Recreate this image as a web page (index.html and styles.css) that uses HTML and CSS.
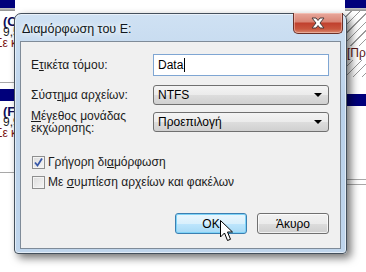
FILE: index.html
```html
<!DOCTYPE html>
<html lang="el">
<head>
  <meta charset="UTF-8">
  <title>Διαμόρφωση του E:</title>
  <link rel="stylesheet" href="styles.css">
</head>
<body>

<div class="desk">
  <div class="desk-left">
    <div class="navy top"></div>
    <div class="rule"></div>
    <div class="vol">
      <div class="vol-name">(C</div>
      <div class="vol-size">9,5</div>
      <div class="vol-state">Σε κ</div>
    </div>
    <div class="rule light"></div>
    <div class="navy band"></div>
    <div class="vol">
      <div class="vol-name">(F:</div>
      <div class="vol-size">9,9</div>
      <div class="vol-state">Σε κ</div>
    </div>
    <div class="rule light"></div>
  </div>

  <div class="desk-right">
    <div class="navy top"></div>
    <div class="rule"></div>
    <div class="hatch"><span class="hatch-text">[Πρ</span></div>
    <div class="navy band right-band"></div>
    <div class="blank"></div>
    <div class="rule light"></div>
    <div class="rule light gap"></div>
  </div>
</div>

<div class="dialog">
  <div class="titlebar">
    <span class="title">Διαμόρφωση του E:</span>
    <button class="close" type="button">
      <svg width="18" height="12" viewBox="0 0 18 12">
        <path d="M3 1 L7 1 L9 3.5 L11 1 L15 1 L11 6 L15 11 L11 11 L9 8.5 L7 11 L3 11 L7 6 Z" fill="#fff" stroke="#4a3b3b" stroke-width="1"/>
      </svg>
    </button>
  </div>

  <div class="client">
    <div class="row">
      <label class="lbl">Ε<u>τ</u>ικέτα τόμου:</label>
      <div class="field">Data<span class="caret"></span></div>
    </div>

    <div class="row">
      <label class="lbl">Σύστ<u>η</u>μα αρχείων:</label>
      <div class="combo">NTFS<span class="arrow"></span></div>
    </div>

    <div class="row row-top">
      <label class="lbl"><u>Μ</u>έγεθος μονάδας<br>εκχώρησης:</label>
      <div class="combo">Προεπιλογή<span class="arrow"></span></div>
    </div>

    <div class="checks">
      <div class="check">
        <span class="box">
          <svg width="11" height="11" viewBox="0 0 11 11">
            <path d="M2 5.5 L4.5 8.5 L9 1.5" fill="none" stroke="#3657a8" stroke-width="1.8"/>
          </svg>
        </span>
        <span>Γρήγορη δι<u>α</u>μόρφωση</span>
      </div>
      <div class="check">
        <span class="box"></span>
        <span>Με <u>σ</u>υμπίεση αρχείων και φακέλων</span>
      </div>
    </div>

    <div class="actions">
      <button class="btn default" type="button">OK</button>
      <button class="btn" type="button">Άκυρο</button>
    </div>
  </div>
</div>

<svg class="cursor" width="14" height="22" viewBox="0 0 14 22">
  <path d="M0.5 0.5 V17 L4.5 13 L7.5 20.5 L10.5 19.3 L7.5 12 H12.5 Z" fill="#fff" stroke="#000" stroke-width="1"/>
</svg>

</body>
</html>
```

FILE: styles.css
```css
body {
  margin: 0;
  width: 366px;
  height: 272px;
  overflow: hidden;
  position: relative;
  background: #fff;
  font-family: "Liberation Sans", Arial, sans-serif;
  font-size: 12px;
  color: #1b1b1b;
}

/* background: disk management window */
.desk {
  display: flex;
  justify-content: space-between;
  height: 272px;
}
.desk-left, .desk-right {
  display: flex;
  flex-direction: column;
  overflow: hidden;
}
.desk-left {
  width: 15px;
}
.desk-right {
  width: 21px;
}
.navy {
  background: #00007b;
}
.top {
  height: 8px;
}
.rule {
  height: 3px;
  background: linear-gradient(#c8c8c8, #8e8e8e);
}
.rule.light {
  height: 1px;
  background: #a8a8a8;
}
.rule.gap {
  margin-top: 4px;
}
.vol {
  height: 66px;
  padding: 5px 0 0 3px;
  line-height: 11px;
  white-space: nowrap;
}
.vol-name {
  font-weight: bold;
  color: #0d0d5a;
  font-size: 13px;
}
.vol-size {
  font-size: 12px;
}
.vol-state {
  color: #7a1010;
  margin-left: -8px;
}
.band {
  height: 12px;
  margin-top: 6px;
}
.desk-left .vol:nth-of-type(2) {
  height: 48px;
  padding-top: 8px;
}
.hatch {
  height: 66px;
  padding: 35px 0 0 2px;
  box-sizing: border-box;
  white-space: nowrap;
  color: #5a1515;
  background: repeating-linear-gradient(135deg, #fff 0 4px, #9a9a9a 4px 5px, #fff 5px 6px);
}
.hatch-text {
  background: #fff;
}
.right-band {
  margin-top: 17px;
}
.blank {
  height: 73px;
}

/* dialog window */
.dialog {
  position: absolute;
  left: 14px;
  top: 13px;
  width: 333px;
  height: 241px;
  border: 1px solid #44505c;
  border-radius: 7px 7px 4px 4px;
  background: linear-gradient(#cfe1f3, #b9d1ea 40%, #bfd5ec);
  box-shadow: inset 0 0 0 1px rgba(255,255,255,0.55), 4px 4px 9px rgba(0,0,0,0.55);
  padding: 0 5px 4px 5px;
  box-sizing: border-box;
  display: flex;
  flex-direction: column;
}
.titlebar {
  height: 27px;
  display: flex;
  justify-content: space-between;
  align-items: flex-start;
}
.title {
  margin: 8px 0 0 2px;
  font-size: 12.5px;
  color: #101820;
  text-shadow: 0 0 5px #fff, 0 0 8px #fff;
}
.close {
  margin: -1px -2px 0 0;
  width: 50px;
  height: 21px;
  border: 1px solid #6b3129;
  border-top: none;
  border-radius: 0 0 5px 5px;
  background: linear-gradient(#e8a89c, #d98474 45%, #c0402e 50%, #c9563e 80%, #d88a70);
  box-shadow: inset 0 0 0 1px rgba(255,220,210,0.45);
  padding: 0;
  display: flex;
  justify-content: center;
  align-items: center;
}

.client {
  flex: 1;
  background: #f0f0f0;
  border: 1px solid #7f8b98;
  padding: 12px 10px 0 10px;
  display: flex;
  flex-direction: column;
}
.row {
  display: flex;
  align-items: center;
  margin-bottom: 9px;
}
.row:nth-child(2) {
  margin-bottom: 5px;
}
.row-top {
  align-items: flex-start;
  margin-bottom: 0;
}
.row-top .lbl {
  line-height: 12px;
}
.row-top .combo {
  margin-top: 2px;
}
.lbl {
  width: 122px;
  line-height: 13px;
}
.field {
  width: 176px;
  height: 22px;
  box-sizing: border-box;
  border: 1px solid #7fa6d3;
  background: #fff;
  padding: 3px 4px;
  line-height: 15px;
  color: #000;
  display: flex;
  align-items: center;
}
.caret {
  width: 1px;
  height: 14px;
  background: #000;
  margin-left: 1px;
}
.combo {
  position: relative;
  width: 176px;
  height: 20px;
  box-sizing: border-box;
  border: 1px solid #707070;
  border-radius: 3px;
  background: linear-gradient(#f4f4f4, #ebebeb 50%, #dddddd 51%, #d0d0d0);
  padding: 0 4px;
  line-height: 18px;
  color: #000;
}
.arrow {
  position: absolute;
  right: 6px;
  top: 7px;
  border-left: 4px solid transparent;
  border-right: 4px solid transparent;
  border-top: 4px solid #000;
}

.checks {
  margin-top: 22px;
  display: flex;
  flex-direction: column;
  gap: 7px;
}
.check {
  display: flex;
  align-items: center;
  gap: 3px;
  margin-left: 1px;
  line-height: 13px;
}
.box {
  width: 13px;
  height: 13px;
  box-sizing: border-box;
  border: 1px solid #8e8f8f;
  background: linear-gradient(135deg, #dcdcdc, #f6f6f6);
  box-shadow: inset 0 0 0 1px #f4f4f4;
  display: flex;
  justify-content: center;
  align-items: center;
}

.actions {
  margin-top: 24px;
  display: flex;
  justify-content: flex-end;
  gap: 10px;
  padding-right: 1px;
}
.btn {
  width: 72px;
  height: 21px;
  border: 1px solid #707070;
  border-radius: 3px;
  background: linear-gradient(#f2f2f2, #ebebeb 50%, #dddddd 51%, #cfcfcf);
  box-shadow: inset 0 0 0 1px rgba(255,255,255,0.7);
  font-family: "Liberation Sans", Arial, sans-serif;
  font-size: 12px;
  color: #000;
  padding: 0;
}
.btn.default {
  border-color: #3c7fb1;
  background: linear-gradient(#eaf6fd, #d9f0fc 50%, #bee6fd 51%, #a7d9f5);
  box-shadow: inset 0 0 0 1px #7fd3f7;
}

.cursor {
  position: absolute;
  left: 220px;
  top: 220px;
}
```
